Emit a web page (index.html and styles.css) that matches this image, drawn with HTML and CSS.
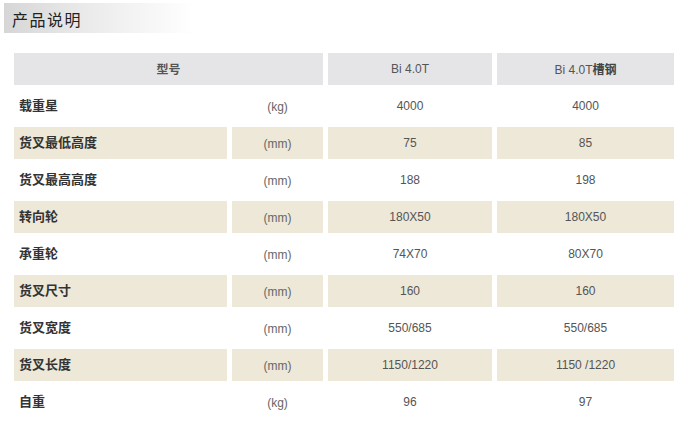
FILE: index.html
```html
<!DOCTYPE html>
<html lang="zh">
<head>
<meta charset="utf-8">
<link rel="stylesheet" href="styles.css">
</head>
<body>
<div class="title"><span>产品说明</span></div>
<table class="spec">
  <colgroup>
    <col class="c1"><col class="c2"><col class="c3"><col class="c4">
  </colgroup>
  <tr class="head">
    <th colspan="2" class="name">型号</th>
    <th>Bi 4.0T</th>
    <th>Bi 4.0T<b>槽钢</b></th>
  </tr>
  <tr><td class="label">载重星</td><td class="unit">(kg)</td><td>4000</td><td>4000</td></tr>
  <tr class="alt"><td class="label">货叉最低高度</td><td class="unit">(mm)</td><td>75</td><td>85</td></tr>
  <tr><td class="label">货叉最高高度</td><td class="unit">(mm)</td><td>188</td><td>198</td></tr>
  <tr class="alt"><td class="label">转向轮</td><td class="unit">(mm)</td><td>180X50</td><td>180X50</td></tr>
  <tr><td class="label">承重轮</td><td class="unit">(mm)</td><td>74X70</td><td>80X70</td></tr>
  <tr class="alt"><td class="label">货叉尺寸</td><td class="unit">(mm)</td><td>160</td><td>160</td></tr>
  <tr><td class="label">货叉宽度</td><td class="unit">(mm)</td><td>550/685</td><td>550/685</td></tr>
  <tr class="alt"><td class="label">货叉长度</td><td class="unit">(mm)</td><td>1150/1220</td><td>1150 /1220</td></tr>
  <tr><td class="label">自重</td><td class="unit">(kg)</td><td>96</td><td>97</td></tr>
</table>
</body>
</html>
```
FILE: styles.css
```css
html, body {
  margin: 0;
  padding: 0;
  background: #fff;
}
body {
  font-family: "Liberation Sans", Arial, "Noto Sans CJK SC", sans-serif;
  color: #555;
}
.title {
  margin: 3px 0 0 4px;
  width: 190px;
  height: 30px;
  background: linear-gradient(to right, #d6d6d6 0%, #e9e9e9 40%, #ffffff 100%);
  display: flex;
  align-items: center;
}
.title span {
  padding-left: 8px;
  padding-top: 2px;
  font-family: "Noto Sans CJK SC", sans-serif;
  font-size: 16px;
  letter-spacing: 1.5px;
  color: #222;
}
.spec {
  margin: 15px 0 0 9px;
  border-collapse: separate;
  border-spacing: 5px;
  table-layout: fixed;
  width: 670px;
}
.c1 { width: 213px; }
.c2 { width: 91px; }
.c3 { width: 164px; }
.c4 { width: 177px; }
.spec th, .spec td {
  height: 32px;
  padding: 0;
  text-align: center;
  vertical-align: middle;
  font-size: 12px;
  font-weight: normal;
  color: #555;
}
.head th {
  background: #e5e5e7;
  padding-bottom: 1px;
  height: 31px;
}
.head th.name, .head th b {
  font-family: "Noto Sans CJK SC", sans-serif;
  font-weight: bold;
  font-size: 12px;
}
.head th b { color: #444; }
.spec td.label {
  text-align: left;
  padding-left: 5px;
  padding-bottom: 4px;
  height: 28px;
  font-family: "Noto Sans CJK SC", sans-serif;
  font-weight: bold;
  font-size: 13px;
  color: #333;
}
.spec td.unit {
  color: #666;
  padding-top: 2px;
  height: 30px;
}
.alt td {
  background: #ede8d8;
}
```
